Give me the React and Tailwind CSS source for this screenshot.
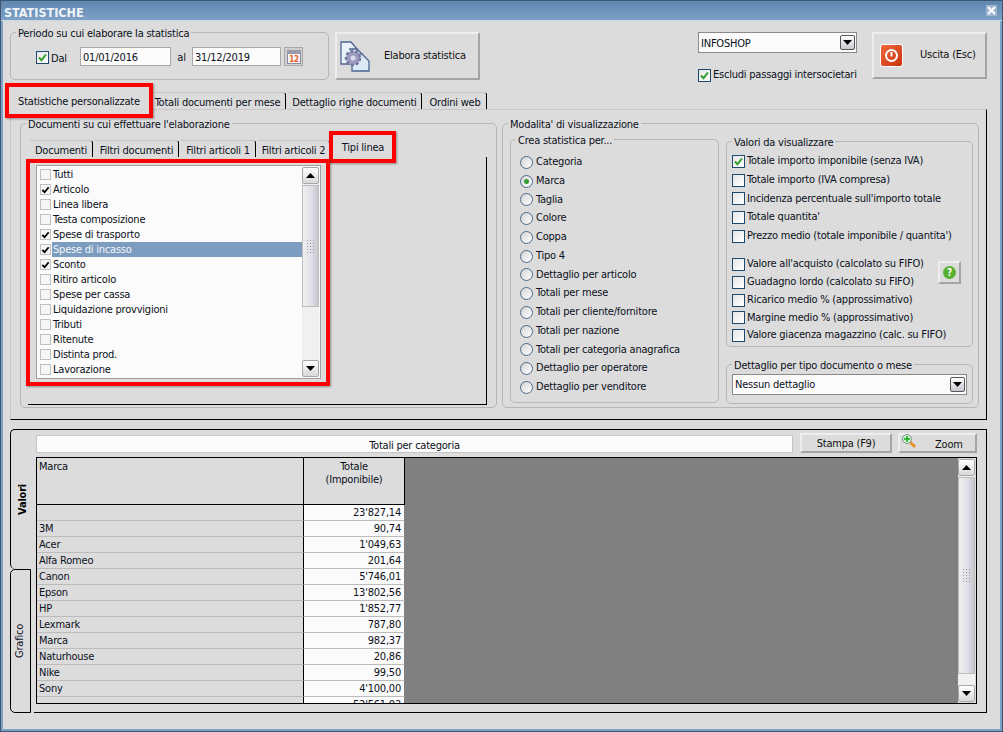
const tipiLinea = [
  ['Tutti', false], ['Articolo', true], ['Linea libera', false], ['Testa composizione', false],
  ['Spese di trasporto', true], ['Spese di incasso', true], ['Sconto', true], ['Ritiro articolo', false],
  ['Spese per cassa', false], ['Liquidazione provvigioni', false], ['Tributi', false], ['Ritenute', false],
  ['Distinta prod.', false], ['Lavorazione', false],
]

const creaPer = [
  'Categoria', 'Marca', 'Taglia', 'Colore', 'Coppa', 'Tipo 4', 'Dettaglio per articolo', 'Totali per mese',
  'Totali per cliente/fornitore', 'Totali per nazione', 'Totali per categoria anagrafica',
  'Dettaglio per operatore', 'Dettaglio per venditore',
]

const righe = [
  ['', "23'827,14"], ['3M', '90,74'], ['Acer', "1'049,63"], ['Alfa Romeo', '201,64'], ['Canon', "5'746,01"],
  ['Epson', "13'802,56"], ['HP', "1'852,77"], ['Lexmark', '787,80'], ['Marca', '982,37'], ['Naturhouse', '20,86'],
  ['Nike', '99,50'], ['Sony', "4'100,00"], ['', "52'561,02"],
]

const Group = ({ title, className, inner, children }) => (
  <fieldset className={`border border-[#b6b6b6] rounded-[5px] min-w-0 ${className}`}>
    <legend className="ml-[5px] px-[2px] h-[13px] leading-[15px]">{title}</legend>
    <div className={inner}>{children}</div>
  </fieldset>
)

const Check = ({ checked }) => (
  <span className="w-[13px] h-[13px] shrink-0 border border-[#1f4a6e] bg-gradient-to-br from-[#e6e6e6] to-white flex items-center justify-center">
    {checked && (
      <svg width="11" height="11" viewBox="0 0 11 11">
        <path d="M2 5.5 L4.5 8.2 L9 2.5" fill="none" stroke="#2f9e2f" strokeWidth="2" />
      </svg>
    )}
  </span>
)

const Radio = ({ checked }) => (
  <span className="w-[13px] h-[13px] shrink-0 rounded-full border border-[#4a6a8a] bg-gradient-to-br from-[#d4d4d4] to-white flex items-center justify-center">
    {checked && <span className="w-[5px] h-[5px] rounded-full bg-[#2f9e2f]" />}
  </span>
)

const Arrow = ({ up }) => (
  <svg width="9" height="5" viewBox="0 0 9 5">
    <path d={up ? 'M0 5 L4.5 0 L9 5 Z' : 'M0 0 L9 0 L4.5 5 Z'} fill="#000" />
  </svg>
)

const ComboArrow = () => (
  <span className="w-[15px] h-[15px] rounded-[2px] border border-[#555] bg-gradient-to-b from-white to-[#c8c8d0] flex items-center justify-center">
    <Arrow />
  </span>
)

const Grip = () => (
  <div className="grid grid-cols-3 gap-x-[2px] gap-y-[2px]">
    {Array.from({ length: 15 }).map((_, i) => <span key={i} className="w-[1px] h-[1px] bg-[#9a9a9a]" />)}
  </div>
)

const ScrollBtn = ({ up }) => (
  <div className="h-[17px] shrink-0 border border-[#a8a8a8] rounded-[2px] bg-gradient-to-b from-white to-[#d8d8d8] flex items-center justify-center">
    <Arrow up={up} />
  </div>
)

const Scrollbar = ({ thumb, className }) => (
  <div className={`w-[17px] shrink-0 flex flex-col bg-[#f0f0f0] ${className}`}>
    <ScrollBtn up />
    <div className="flex-1 min-h-0 pt-[1px]">
      <div className={`${thumb} border border-[#bdbdbd] bg-gradient-to-r from-[#eeeeee] via-[#e2e2ea] to-[#c6c6ce] flex items-center justify-center`}>
        <Grip />
      </div>
    </div>
    <ScrollBtn />
  </div>
)

const FlatBtn = ({ className, children }) => (
  <div className={`border-2 border-t-[#eeeeee] border-l-[#eeeeee] border-r-[#a4a4a4] border-b-[#a4a4a4] bg-[#dcdcdc] flex items-center ${className}`}>
    {children}
  </div>
)

const Tab = ({ className, children }) => (
  <div className={`h-[17px] pt-[4px] border-t border-t-[#c4c4c4] border-r border-r-black rounded-tr-[3px] flex items-center justify-center whitespace-nowrap ${className}`}>
    {children}
  </div>
)

const Red = ({ className }) => (
  <div className={`absolute border-[4px] border-[#fe0000] shadow-[1px_1px_2px_rgba(0,0,0,0.35)] pointer-events-none z-20 ${className}`} />
)

export default function App() {
  return (
    <div className="w-[1003px] h-[732px] overflow-hidden bg-[#dcdcdc] border-x border-b border-[#3c5673] text-[11px] tracking-[-0.22px] text-[#0b1020] font-['DejaVu_Sans_Condensed','DejaVu_Sans',sans-serif]">
      <div className="relative h-full border-x-2 border-b-2 border-x-[#7fa1c5] border-b-[#7fa1c5]">
        {/* titolo */}
        <div className="-mx-[2px] h-[21px] bg-gradient-to-b from-[#5f86ae] to-[#7fa1c5] border-t border-t-[#3c5673] border-b border-b-[#c9d6e4] flex items-center justify-between pl-[3px] pr-[5px]">
          <span className="pt-[5px] font-bold text-[12.5px] tracking-normal text-[#eef3f8]">STATISTICHE</span>
          <span className="w-[11px] h-[11px] bg-[#9db6d2] flex items-center justify-center">
            <svg width="9" height="9" viewBox="0 0 9 9">
              <path d="M1 1 L8 8 M8 1 L1 8" stroke="#fff" strokeWidth="2" />
            </svg>
          </span>
        </div>

        <div className="pl-[7px]">
          {/* riga superiore */}
          <div className="h-[67px] pt-[5px] flex items-start">
            <Group title="Periodo su cui elaborare la statistica" className="w-[319px] h-[54px]" inner="flex items-start pl-[25px] pt-[8px]">
              <span className="mt-[4px]"><Check checked /></span>
              <span className="ml-[2px] w-[29px] pt-[4px]">Dal</span>
              <div className="w-[91px] h-[19px] border border-[#a8a8a8] bg-[#fbfbfb] pl-[2px] leading-[20px]">01/01/2016</div>
              <span className="w-[21px] text-center pt-[3px]">al</span>
              <div className="w-[89px] h-[19px] border border-[#a8a8a8] bg-[#fbfbfb] pl-[2px] leading-[20px]">31/12/2019</div>
              <div className="ml-[3px] w-[19px] h-[19px] border border-[#a8a8a8] bg-[#d0d0d0] flex items-center justify-center">
                <svg width="16" height="16" viewBox="0 0 16 16">
                  <rect x="1.5" y="2.5" width="13" height="12" fill="#f7f7fb" stroke="#8a8aa0" />
                  <rect x="1" y="1" width="14" height="4" fill="#9a9aa8" />
                  <text x="8" y="13" textAnchor="middle" fontSize="8" fontWeight="bold" fill="#e8601c">12</text>
                </svg>
              </div>
            </Group>
            <FlatBtn className="ml-[6px] mt-[6px] w-[145px] h-[48px] relative">
              <svg className="ml-[2px]" width="32" height="32" viewBox="0 0 32 32">
                <path d="M2 2 H12 L18 9 V24 H2 Z" fill="#e8f0fa" stroke="#4a6590" strokeWidth="1.3" />
                <path d="M10 9 H18 L30 21 V31 H13 V24" fill="#dce9f6" stroke="#4a6590" strokeWidth="1.3" />
                <path d="M18 9 L18 14 L24 14" fill="none" stroke="#4a6590" />
                <circle cx="14" cy="18" r="7" fill="#9c9cc0" stroke="#77779c" strokeWidth="2.5" strokeDasharray="3 2" />
                <circle cx="14" cy="18" r="2.5" fill="#dcdcec" />
              </svg>
              <span className="ml-[13px] text-[#111]">Elabora statistica</span>
            </FlatBtn>
            <div className="ml-[218px] mt-[6px] w-[159px]">
              <div className="h-[21px] border border-[#8a8a8a] bg-[#fbfbfb] flex items-center justify-between pl-[2px] pr-[1px]">
                <span className="pt-[3px]">INFOSHOP</span>
                <ComboArrow />
              </div>
              <div className="mt-[14px] flex items-center whitespace-nowrap">
                <Check checked />
                <span className="ml-[2px]">Escludi passaggi intersocietari</span>
              </div>
            </div>
            <FlatBtn className="ml-[15px] mt-[6px] w-[115px] h-[47px]">
              <span className="ml-[6px] w-[23px] h-[23px] shrink-0 rounded-[3px] border border-white bg-gradient-to-br from-[#f0683a] to-[#c8320c] flex items-center justify-center">
                <svg width="15" height="15" viewBox="0 0 15 15">
                  <circle cx="7.5" cy="7.5" r="5.5" fill="none" stroke="#fff" strokeWidth="2" />
                  <path d="M7.5 4 V8.5" stroke="#fff" strokeWidth="2" />
                </svg>
              </span>
              <span className="ml-[17px] text-[#111]">Uscita (Esc)</span>
            </FlatBtn>
          </div>

          {/* schede principali */}
          <div className="h-[21px] flex items-end">
            <div className="w-[138px] h-[27px] -mb-[6px] z-10 bg-[#dcdcdc] flex items-center justify-center pt-[2px]">Statistiche personalizzate</div>
            <Tab className="ml-[2px] w-[136px]">Totali documenti per mese</Tab>
            <Tab className="ml-[2px] w-[134px]">Dettaglio righe documenti</Tab>
            <Tab className="ml-[2px] w-[63px]">Ordini web</Tab>
          </div>
          <div className="w-[977px] h-[311px] border-t border-t-[#c8c8c8] border-l border-l-[#c8c8c8] border-r border-r-black border-b border-b-black pl-[9px] pt-[7px] flex gap-[5px]">
            <Group title="Documenti su cui effettuare l'elaborazione" className="w-[477px] h-[291px]" inner="pl-[7px]">
              <div className="mt-[10px] h-[17px] ml-[2px] flex">
                <Tab className="w-[63px]">Documenti</Tab>
                <Tab className="ml-[2px] w-[84px]">Filtri documenti</Tab>
                <Tab className="ml-[2px] w-[75px]">Filtri articoli 1</Tab>
                <Tab className="ml-[2px] w-[72px]">Filtri articoli 2</Tab>
                <div className="ml-[5px] w-[56px] h-[17px] flex items-center justify-center whitespace-nowrap">Tipi linea</div>
              </div>
              <div className="w-[459px] h-[248px] border-r border-r-black border-b border-b-black pl-[8px] pt-[8px]">
                <div className="w-[285px] h-[214px] border border-[#a0a0a0] bg-[#fbfbfb] flex">
                  <div className="flex-1 pl-[3px] pt-[1px]">
                    {tipiLinea.map(([nome, on]) => (
                      <div key={nome} className="h-[15px] flex items-center">
                        <span className="w-[11px] h-[11px] shrink-0 border border-[#c0c0c0] bg-[#f6f6f6] flex items-center justify-center">
                          {on && (
                            <svg width="10" height="10" viewBox="0 0 10 10">
                              <path d="M1.5 5 L4 7.5 L8.5 2" fill="none" stroke="#000" strokeWidth="2" />
                            </svg>
                          )}
                        </span>
                        <span className={`ml-[1px] flex-1 h-[15px] leading-[15px] pl-[1px] ${nome === 'Spese di incasso' ? 'bg-[#7c9dbf] text-[#f4f6fa]' : ''}`}>{nome}</span>
                      </div>
                    ))}
                  </div>
                  <Scrollbar thumb="h-[122px]" className="my-[1px] mr-[1px]" />
                </div>
              </div>
            </Group>

            <Group title="Modalita' di visualizzazione" className="w-[477px] h-[291px]" inner="flex gap-[7px] pl-[7px] pt-[3px]">
              <Group title="Crea statistica per..." className="w-[209px] h-[270px]" inner="pl-[9px] pt-[7px]">
                {creaPer.map((nome) => (
                  <div key={nome} className="h-[18.75px] flex items-center">
                    <Radio checked={nome === 'Marca'} />
                    <span className="ml-[3px]">{nome}</span>
                  </div>
                ))}
              </Group>
              <div className="w-[247px] pt-[2px]">
                <Group title="Valori da visualizzare" className="h-[212px]" inner="pl-[5px] pt-[4px]">
                  {[
                    ['Totale importo imponibile (senza IVA)', true],
                    ['Totale importo (IVA compresa)', false],
                    ["Incidenza percentuale sull'importo totale", false],
                    ["Totale quantita'", false],
                    ["Prezzo medio (totale imponibile / quantita')", false],
                  ].map(([nome, on]) => (
                    <div key={nome} className="h-[18.75px] flex items-center whitespace-nowrap">
                      <Check checked={on} />
                      <span className="ml-[2px]">{nome}</span>
                    </div>
                  ))}
                  <div className="mt-[10px] flex items-start">
                    <div className="w-[206px]">
                      {[
                        "Valore all'acquisto (calcolato su FIFO)",
                        'Guadagno lordo (calcolato su FIFO)',
                        'Ricarico medio % (approssimativo)',
                        'Margine medio % (approssimativo)',
                        'Valore giacenza magazzino (calc. su FIFO)',
                      ].map((nome) => (
                        <div key={nome} className="h-[17.75px] flex items-center whitespace-nowrap">
                          <Check />
                          <span className="ml-[2px]">{nome}</span>
                        </div>
                      ))}
                    </div>
                    <FlatBtn className="mt-[5px] w-[23px] h-[23px] justify-center">
                      <span className="w-[13px] h-[13px] rounded-full bg-[#58b030] text-white font-bold text-[10px] leading-[13px] text-center">?</span>
                    </FlatBtn>
                  </div>
                </Group>
                <Group title="Dettaglio per tipo documento o mese" className="mt-[11px] h-[46px]" inner="pl-[5px] pt-[3px]">
                  <div className="w-[235px] h-[21px] border border-[#8a8a8a] bg-[#fbfbfb] flex items-center justify-between pl-[2px] pr-[1px]">
                    <span className="pt-[2px]">Nessun dettaglio</span>
                    <ComboArrow />
                  </div>
                </Group>
              </div>
            </Group>
          </div>

          {/* griglia risultati */}
          <div className="mt-[9px] w-[977px] h-[284px] flex">
            <div className="w-[24px] shrink-0 flex flex-col">
              <div className="h-[140px] border-l border-t border-black rounded-tl-[5px] rounded-bl-[5px] flex items-center justify-center">
                <span className="[writing-mode:vertical-rl] rotate-180 font-bold text-[#000] ml-[2px]">Valori</span>
              </div>
              <div className="flex-1 w-[21px] border-l border-t border-r border-b border-black rounded-tl-[5px] rounded-bl-[5px] flex items-center justify-center">
                <span className="[writing-mode:vertical-rl] rotate-180">Grafico</span>
              </div>
            </div>
            <div className="flex-1 min-w-0 border-t border-r border-b border-black pl-[2px] pt-[3px]">
              <div className="flex h-[22px] items-start">
                <div className="mt-[2px] w-[757px] h-[18px] border border-[#c4c4c4] bg-[#fbfbfb] text-center leading-[19px]">Totali per categoria</div>
                <FlatBtn className="ml-[7px] w-[92px] h-[20px] justify-center text-[#111] pt-[3px]">Stampa (F9)</FlatBtn>
                <FlatBtn className="ml-[6px] w-[79px] h-[20px] relative">
                  <svg className="ml-[1px] -mt-[5px]" width="16" height="16" viewBox="0 0 16 16">
                    <path d="M9 9 L14 14" stroke="#e8902c" strokeWidth="3" />
                    <circle cx="6" cy="6" r="4.5" fill="#d8ecd8" stroke="#7a9a8a" />
                    <path d="M6 3 V9 M3 6 H9" stroke="#10b010" strokeWidth="1.5" />
                  </svg>
                  <span className="ml-[18px] pt-[4px] text-[#111]">Zoom</span>
                </FlatBtn>
              </div>
              <div className="mt-[2px] w-[941px] h-[247px] border border-black flex">
                <div className="w-[368px] shrink-0 overflow-hidden">
                  <div className="flex h-[47px] border-b border-b-black">
                    <div className="w-[267px] border-r border-r-black pl-[2px] leading-[14px] pt-[2px]">Marca</div>
                    <div className="flex-1 text-center leading-[13px] pt-[2px] border-r border-r-black">Totale<br />(Imponibile)</div>
                  </div>
                  {righe.map(([nome, valore], i) => (
                    <div key={i} className="flex h-[16px] leading-[15px]">
                      <div className="w-[267px] bg-[#dcdcdc] border-b border-b-[#bcbcbc] border-r border-r-black pl-[2px]">{nome}</div>
                      <div className="flex-1 bg-[#fbfbfb] border-b border-b-[#bcbcbc] border-r border-r-[#808080] text-right pr-[3px]">{valore}</div>
                    </div>
                  ))}
                </div>
                <div className="flex-1 bg-[#808080]" />
                <Scrollbar thumb="h-[197px]" className="my-[1px] mr-[1px]" />
              </div>
            </div>
          </div>
        </div>

        {/* evidenziazioni */}
        <Red className="left-[2px] top-[83px] w-[148px] h-[35px]" />
        <Red className="left-[326px] top-[131px] w-[67px] h-[32px]" />
        <Red className="left-[23px] top-[159px] w-[304px] h-[227px]" />
      </div>
    </div>
  )
}
